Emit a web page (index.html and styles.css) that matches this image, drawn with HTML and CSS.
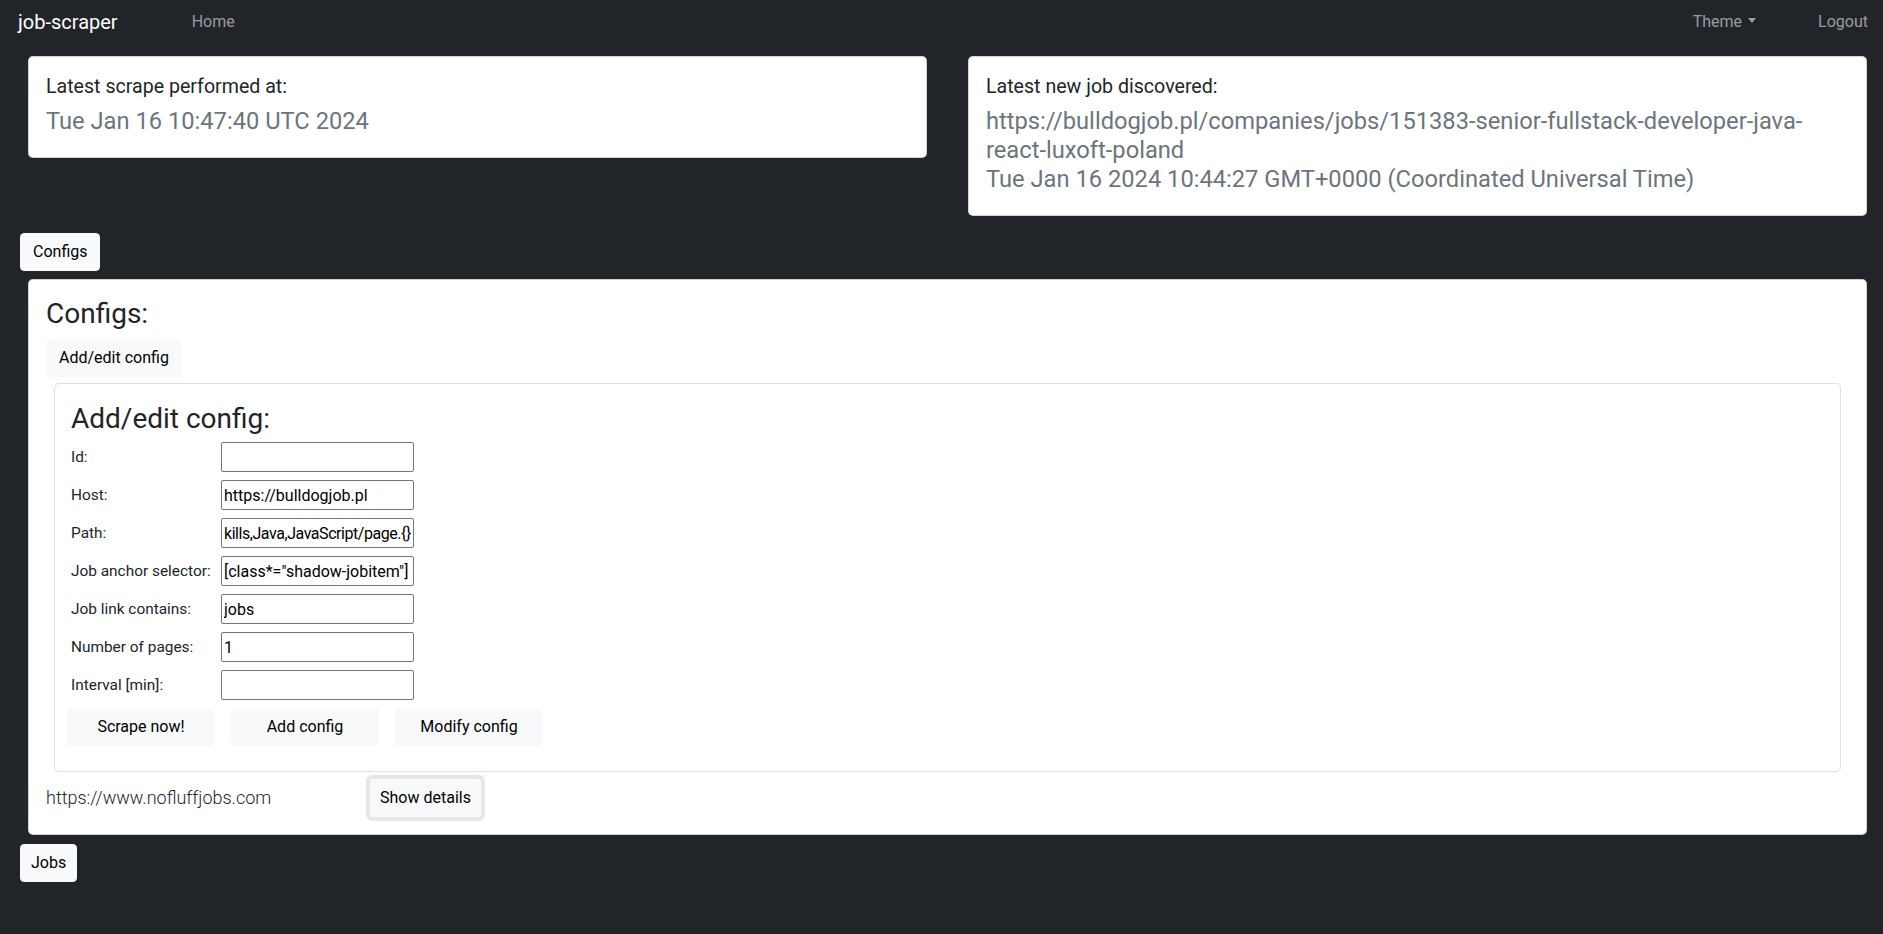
FILE: index.html
```html
<!DOCTYPE html>
<html lang="en">
<head>
<meta charset="utf-8">
<title>job-scraper</title>
<link rel="stylesheet" href="styles.css">
</head>
<body>
<nav class="navbar">
  <a class="brand" href="#">job-scraper</a>
  <a class="nav-link" href="#">Home</a>
  <div class="spacer"></div>
  <a class="nav-link theme" href="#">Theme<span class="caret"></span></a>
  <a class="nav-link logout" href="#">Logout</a>
</nav>
<main class="page">
  <div class="status-row">
    <div class="card status">
      <div class="status-label">Latest scrape performed at:</div>
      <div class="status-value">Tue Jan 16 10:47:40 UTC 2024</div>
    </div>
    <div class="card status">
      <div class="status-label">Latest new job discovered:</div>
      <div class="status-value">https://bulldogjob.pl/companies/jobs/151383-senior-fullstack-developer-java-react-luxoft-poland<br>Tue Jan 16 2024 10:44:27 GMT+0000 (Coordinated Universal Time)</div>
    </div>
  </div>

  <button class="btn toggle">Configs</button>

  <section class="card configs">
    <h3 class="heading">Configs:</h3>
    <button class="btn add-edit">Add/edit config</button>
    <div class="inner-card">
      <h3 class="heading inner-heading">Add/edit config:</h3>
      <div class="config-form">
        <label class="form-label">Id:</label><input class="form-input" type="text" value="">
        <label class="form-label">Host:</label><input class="form-input" type="text" value="https://bulldogjob.pl">
        <label class="form-label">Path:</label><input class="form-input path" type="text" value="kills,Java,JavaScript/page.{}">
        <label class="form-label">Job anchor selector:</label><input class="form-input" type="text" value='[class*="shadow-jobitem"]'>
        <label class="form-label">Job link contains:</label><input class="form-input" type="text" value="jobs">
        <label class="form-label">Number of pages:</label><input class="form-input" type="text" value="1">
        <label class="form-label">Interval [min]:</label><input class="form-input" type="text" value="">
      </div>
      <div class="actions">
        <button class="btn action">Scrape now!</button>
        <button class="btn action">Add config</button>
        <button class="btn action">Modify config</button>
      </div>
    </div>
    <div class="config-item">
      <span class="host">https://www.nofluffjobs.com</span>
      <button class="btn details">Show details</button>
    </div>
  </section>

  <button class="btn toggle jobs">Jobs</button>
</main>
</body>
</html>
```
FILE: styles.css
```css
* { box-sizing: border-box; }

html, body {
  margin: 0;
  padding: 0;
  background: #212529;
  font-family: "Segoe UI", Roboto, "Liberation Sans", sans-serif;
  color: #212529;
  height: 100%;
}

.navbar {
  display: flex;
  align-items: center;
  height: 44px;
  padding: 0 15px 0 18px;
}

.brand {
  color: #ffffff;
  font-size: 20px;
  text-decoration: none;
  line-height: 30px;
  margin-right: 74px;
}

.nav-link {
  color: rgba(255, 255, 255, 0.55);
  text-decoration: none;
  font-size: 16px;
  line-height: 24px;
}

.spacer { flex: 1; }

.theme {
  display: inline-flex;
  align-items: center;
  margin-right: 62px;
}

.caret {
  display: inline-block;
  margin-left: 6px;
  border-top: 5px solid rgba(255, 255, 255, 0.55);
  border-left: 4px solid transparent;
  border-right: 4px solid transparent;
  margin-top: -3px;
}

.page {
  padding: 12px 16px 0 20px;
}

.status-row {
  display: grid;
  grid-template-columns: 1fr 1fr;
  column-gap: 41px;
  padding-left: 8px;
  align-items: start;
}

.card {
  background: #ffffff;
  border: 1px solid rgba(0, 0, 0, 0.175);
  border-radius: 5px;
}

.status {
  padding: 18px 17px 13px;
}

.status-label {
  font-size: 19.6px;
  line-height: 24px;
  margin-bottom: 8px;
}

.status-value {
  font-size: 23.7px;
  line-height: 29px;
  color: #6c757d;
  margin-bottom: 8px;
}

.btn {
  font-family: inherit;
  background: #f8f9fa;
  color: #000000;
  border: 1px solid #f8f9fa;
  border-radius: 4px;
  font-size: 16px;
  line-height: 24px;
  padding: 6px 12px;
  cursor: pointer;
}

.toggle {
  display: block;
  margin-top: 17px;
}

.jobs {
  margin-top: 9px;
  padding: 6px 10px;
}

.configs {
  margin: 8px 0 0 8px;
  padding: 17px 17px 13px;
}

.heading {
  font-size: 28px;
  font-weight: 400;
  line-height: 34px;
  margin: 0 0 8px;
}

.inner-heading {
  margin-bottom: 6px;
}

.add-edit {
  display: block;
}

.inner-card {
  margin: 6px 8px 0;
  border: 1px solid #dee2e6;
  border-radius: 5px;
  padding: 18px 16px 25px;
}

.config-form {
  display: grid;
  grid-template-columns: 150px 193px;
  row-gap: 8px;
  align-items: center;
}

.form-label {
  font-size: 15.4px;
}

.form-input {
  height: 30px;
  border: 1px solid #767676;
  border-radius: 2px;
  font-family: inherit;
  font-size: 16px;
  padding: 1px 2px;
  color: #000000;
  background: #ffffff;
}

.path {
  letter-spacing: -0.45px;
}

.actions {
  display: flex;
  gap: 16px;
  margin: 8px 0 0 -4px;
}

.action {
  width: 148px;
  padding: 6px 0;
}

.config-item {
  display: flex;
  align-items: center;
  margin-top: 3px;
}

.host {
  width: 320px;
  font-size: 18px;
  font-weight: 300;
  color: #212529;
  margin-top: -2px;
}

.details {
  border: 4px solid #e6e7e8;
  border-radius: 6px;
  padding: 7px 10px;
  font-size: 16px;
}
```
